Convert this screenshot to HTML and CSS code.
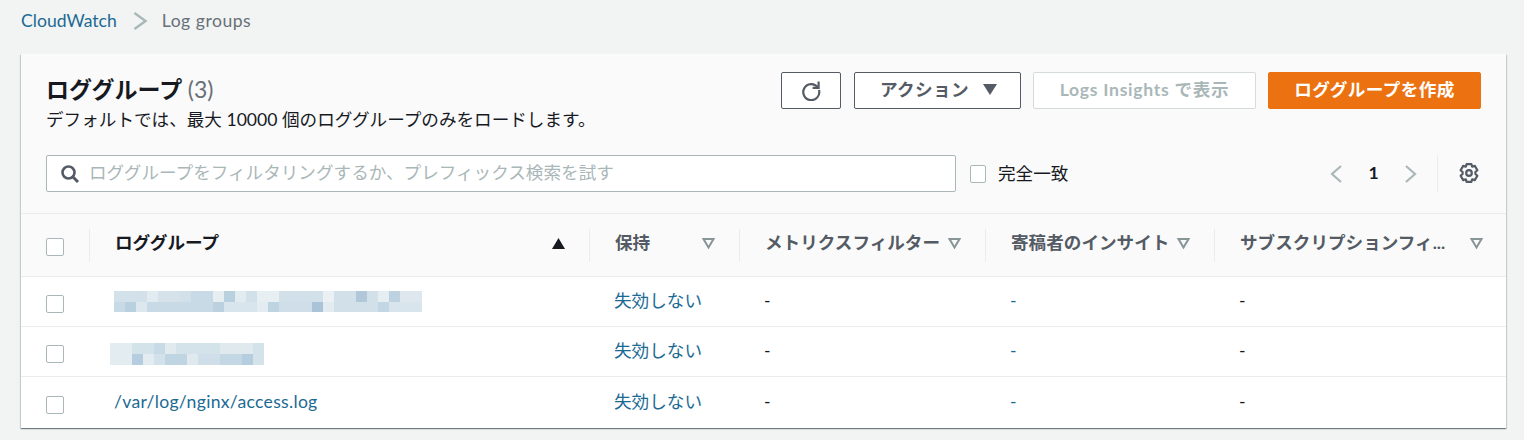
FILE: index.html
```html
<!DOCTYPE html>
<html lang="ja">
<head>
<meta charset="utf-8">
<title>Log groups</title>
<link rel="stylesheet" href="styles.css">
</head>
<body>
<nav class="crumbs">
  <a class="link" href="#">CloudWatch</a>
  <svg class="crumb-sep" width="16" height="20" viewBox="0 0 16 20"><path d="M2.5 2 L13.5 10 L2.5 18" fill="none" stroke="#aab7b8" stroke-width="2.4"/></svg>
  <span class="crumb-cur">Log groups</span>
</nav>
<main class="card">
  <section class="head">
    <div class="head-top">
      <div class="titles">
        <h1 class="title">ロググループ <span class="count">(3)</span></h1>
        <p class="desc">デフォルトでは、最大 10000 個のロググループのみをロードします。</p>
      </div>
      <div class="actions">
        <button class="btn btn-icon"><svg width="22" height="22" viewBox="0 0 22 22"><path d="M17.6 8.2 A8 8 0 1 0 19 11" fill="none" stroke="#545b64" stroke-width="2.2"/><path d="M18.6 2.6 V8.8 H12.6" fill="none" stroke="#545b64" stroke-width="2.2"/></svg></button>
        <button class="btn btn-action">アクション<svg width="14" height="11" viewBox="0 0 14 11"><path d="M0 0 H14 L7 11 Z" fill="#545b64"/></svg></button>
        <button class="btn btn-disabled">Logs Insights で表示</button>
        <button class="btn btn-primary">ロググループを作成</button>
      </div>
    </div>
    <div class="tools">
      <div class="search">
        <svg width="20" height="20" viewBox="0 0 20 20"><circle cx="8.5" cy="8.5" r="6" fill="none" stroke="#545b64" stroke-width="2.6"/><path d="M12.8 12.8 L18 18" stroke="#545b64" stroke-width="3"/></svg>
        <span class="placeholder">ロググループをフィルタリングするか、プレフィックス検索を試す</span>
      </div>
      <label class="exact"><span class="cb cb-small"></span>完全一致</label>
      <div class="pager">
        <svg width="14" height="20" viewBox="0 0 14 20"><path d="M12 2 L3 10 L12 18" fill="none" stroke="#aab7b8" stroke-width="2.2"/></svg>
        <span class="page-num">1</span>
        <svg width="14" height="20" viewBox="0 0 14 20"><path d="M2 2 L11 10 L2 18" fill="none" stroke="#aab7b8" stroke-width="2.2"/></svg>
      </div>
      <div class="gear-wrap">
        <svg width="22" height="22" viewBox="0 0 22 22"><path d="M8.6 2.2 H13.4 L14.2 4.7 L16.8 3.9 L19.4 8.2 L17.4 10 V12 L19.4 13.8 L16.8 18.1 L14.2 17.3 L13.4 19.8 H8.6 L7.8 17.3 L5.2 18.1 L2.6 13.8 L4.6 12 V10 L2.6 8.2 L5.2 3.9 L7.8 4.7 Z" fill="none" stroke="#545b64" stroke-width="2.2" stroke-linejoin="round"/><circle cx="11" cy="11" r="2.8" fill="none" stroke="#545b64" stroke-width="2.2"/></svg>
      </div>
    </div>
  </section>
  <section class="table">
    <div class="row row-head">
      <div class="cell cell-check"><span class="cb"></span></div>
      <div class="cell th th-main"><span class="th-label">ロググループ</span><svg width="13" height="11" viewBox="0 0 13 11"><path d="M6.5 0 L13 11 H0 Z" fill="#16191f"/></svg></div>
      <div class="cell th"><span class="th-label">保持</span><svg class="sort" width="13" height="11" viewBox="0 0 13 11"><path d="M1.5 1 H11.5 L6.5 9.5 Z" fill="none" stroke="#879596" stroke-width="2"/></svg></div>
      <div class="cell th"><span class="th-label">メトリクスフィルター</span><svg class="sort" width="13" height="11" viewBox="0 0 13 11"><path d="M1.5 1 H11.5 L6.5 9.5 Z" fill="none" stroke="#879596" stroke-width="2"/></svg></div>
      <div class="cell th"><span class="th-label">寄稿者のインサイト</span><svg class="sort" width="13" height="11" viewBox="0 0 13 11"><path d="M1.5 1 H11.5 L6.5 9.5 Z" fill="none" stroke="#879596" stroke-width="2"/></svg></div>
      <div class="cell th th-last"><span class="th-label">サブスクリプションフィ...</span><svg class="sort" width="13" height="11" viewBox="0 0 13 11"><path d="M1.5 1 H11.5 L6.5 9.5 Z" fill="none" stroke="#879596" stroke-width="2"/></svg></div>
    </div>
    <div class="row">
      <div class="cell cell-check"><span class="cb"></span></div>
      <div class="cell td-main">
        <svg class="blur" width="308" height="21" viewBox="0 0 28 2" preserveAspectRatio="none" shape-rendering="crispEdges">
          <rect width="28" height="2" fill="#d2e0e9"/>
          <rect x="0" y="0" width="2" height="1" fill="#d3e1ea"/><rect x="3" y="0" width="1" height="1" fill="#e2ebf0"/><rect x="4" y="0" width="2" height="1" fill="#d5e2ea"/><rect x="7" y="0" width="2" height="1" fill="#c8dae5"/><rect x="9" y="0" width="1" height="1" fill="#e6eef2"/><rect x="10" y="0" width="1" height="1" fill="#b9d0df"/><rect x="11" y="0" width="1" height="1" fill="#e2ebf0"/><rect x="13" y="0" width="2" height="1" fill="#e8eff3"/><rect x="19" y="0" width="1" height="1" fill="#eaf0f4"/><rect x="22" y="0" width="1" height="1" fill="#b0c8d9"/><rect x="24" y="0" width="1" height="1" fill="#e6eef2"/><rect x="25" y="0" width="1" height="1" fill="#bdd2e0"/><rect x="26" y="0" width="2" height="1" fill="#dde7ed"/>
          <rect x="0" y="1" width="1" height="1" fill="#c8dae5"/><rect x="1" y="1" width="1" height="1" fill="#b9d0df"/><rect x="2" y="1" width="1" height="1" fill="#dce7ee"/><rect x="3" y="1" width="6" height="1" fill="#c8dae5"/><rect x="9" y="1" width="1" height="1" fill="#bbd1e0"/><rect x="10" y="1" width="3" height="1" fill="#d9e5ec"/><rect x="13" y="1" width="1" height="1" fill="#e3ecf1"/><rect x="14" y="1" width="1" height="1" fill="#bfd4e1"/><rect x="15" y="1" width="3" height="1" fill="#cfdee8"/><rect x="18" y="1" width="1" height="1" fill="#aac3d7"/><rect x="19" y="1" width="1" height="1" fill="#e2ebf0"/><rect x="24" y="1" width="1" height="1" fill="#c3d6e3"/><rect x="25" y="1" width="3" height="1" fill="#d9e5ec"/>
        </svg>
      </div>
      <div class="cell"><a class="link" href="#">失効しない</a></div>
      <div class="cell">-</div>
      <div class="cell"><a class="link" href="#">-</a></div>
      <div class="cell cell-last">-</div>
    </div>
    <div class="row">
      <div class="cell cell-check"><span class="cb"></span></div>
      <div class="cell td-main td-shift">
        <svg class="blur" width="154" height="22" viewBox="0 0 14 2" preserveAspectRatio="none" shape-rendering="crispEdges">
          <rect width="14" height="2" fill="#d4e2ea"/>
          <rect x="0" y="0" width="2" height="1" fill="#e3ecf1"/><rect x="4" y="0" width="1" height="1" fill="#c8dae5"/><rect x="5" y="0" width="1" height="1" fill="#e0eaef"/><rect x="10" y="0" width="3" height="1" fill="#dfe9ee"/>
          <rect x="0" y="1" width="2" height="1" fill="#e3ecf1"/><rect x="2" y="1" width="1" height="1" fill="#b5cdde"/><rect x="3" y="1" width="1" height="1" fill="#e3ecf1"/><rect x="4" y="1" width="1" height="1" fill="#d3e1ea"/><rect x="5" y="1" width="2" height="1" fill="#c0d5e2"/><rect x="7" y="1" width="1" height="1" fill="#dfe9ee"/><rect x="8" y="1" width="2" height="1" fill="#cfdee8"/><rect x="10" y="1" width="2" height="1" fill="#c3d7e4"/><rect x="12" y="1" width="1" height="1" fill="#b5cdde"/>
        </svg>
      </div>
      <div class="cell"><a class="link" href="#">失効しない</a></div>
      <div class="cell">-</div>
      <div class="cell"><a class="link" href="#">-</a></div>
      <div class="cell cell-last">-</div>
    </div>
    <div class="row">
      <div class="cell cell-check"><span class="cb"></span></div>
      <div class="cell td-main"><a class="link link-path" href="#">/var/log/nginx/access.log</a></div>
      <div class="cell"><a class="link" href="#">失効しない</a></div>
      <div class="cell">-</div>
      <div class="cell"><a class="link" href="#">-</a></div>
      <div class="cell cell-last">-</div>
    </div>
  </section>
</main>
</body>
</html>
```
FILE: styles.css
```css
* { box-sizing: border-box; }
html, body { margin: 0; padding: 0; }
body {
  width: 1524px;
  height: 440px;
  overflow: hidden;
  background: #f2f3f3;
  color: #16191f;
  font-family: Lato, "Noto Sans CJK JP", sans-serif;
  font-size: 17.6px;
  line-height: 22px;
}
.link { color: #1b6a94; text-decoration: none; }
.link-path { letter-spacing: .3px; }
.crumbs {
  display: flex;
  align-items: center;
  height: 42px;
  padding-left: 21px;
  margin-bottom: 12px;
}
.crumb-sep { margin: 0 14px 0 15px; }
.crumb-cur { color: #687078; letter-spacing: .5px; }
.card {
  width: 1485px;
  margin-left: 21px;
  height: 374px;
  background: #fff;
  box-shadow: 0 1px 1px 0 rgba(0, 28, 36, .4), 1px 1px 1px 0 rgba(0, 28, 36, .12), -1px 1px 1px 0 rgba(0, 28, 36, .12);
}
.head {
  height: 160px;
  background: #fafafa;
  border-bottom: 1px solid #eaeded;
  padding: 18px 25px 0 25px;
}
.head-top { display: flex; justify-content: space-between; height: 83px; }
.title { margin: 3px 0 0; font-size: 23px; line-height: 28px; font-weight: 700; }
.count { font-weight: 400; color: #687078; }
.desc { margin: 6px 0 0; font-size: 17.6px; line-height: 22px; }
.actions { display: flex; gap: 12px; }
.btn {
  height: 37px;
  border: 1px solid #545b64;
  border-radius: 2px;
  background: #fff;
  color: #545b64;
  font: 700 17.6px/22px Lato, "Noto Sans CJK JP", sans-serif;
  padding: 0 0 2px;
  display: flex;
  align-items: center;
  justify-content: center;
}
.btn-icon { width: 60px; margin-right: 1px; padding: 0 0 2px; }
.btn-action { width: 167px; gap: 14px; letter-spacing: .4px; padding-left: 2px; }
.btn-disabled { width: 223px; border-color: #d5dbdb; color: #aab7b8; letter-spacing: .7px; }
.btn-primary { width: 213px; border-color: #ec7211; background: #ec7211; color: #fff; letter-spacing: .4px; }
.tools { display: flex; align-items: center; height: 37px; }
.search {
  width: 910px;
  height: 37px;
  display: flex;
  align-items: center;
  gap: 9px;
  padding: 0 0 0 13px;
  background: #fff;
  border: 1px solid #aab7b8;
  border-radius: 2px;
}
.placeholder { color: #aab7b8; margin-bottom: 2px; }
.exact { display: flex; align-items: center; gap: 12px; margin-left: 14px; }
.cb {
  display: block;
  width: 18px;
  height: 18px;
  background: #fff;
  border: 1.5px solid #aab7b8;
  border-radius: 2px;
}
.cb-small { width: 16px; }
.pager { display: flex; align-items: center; margin-left: auto; }
.page-num { width: 61px; text-align: center; font-weight: 700; margin-bottom: 2px; }
.gear-wrap {
  display: flex;
  align-items: center;
  height: 37px;
  margin-left: 19px;
  padding-left: 20px;
  border-left: 1px solid #eaeded;
  padding-right: 1px;
  padding-bottom: 2px;
}
.table { display: block; }
.row {
  display: grid;
  grid-template-columns: 68px 500px 150px 246px 229px 1fr;
  align-items: center;
  height: 50px;
  border-bottom: 1px solid #eaeded;
}
.row:last-child { border-bottom: 0; height: 51px; }
.row-head { height: 63px; background: #fafafa; border-bottom: 1px solid #eaeded; }
.cell { display: flex; align-items: center; padding: 0 0 2px 25px; white-space: nowrap; }
.cell-check { padding: 5px 0 0 25px; }
.row-head .cell-check { padding-top: 3px; }
.row:last-child .cell-check { padding-top: 4px; }
.th {
  justify-content: space-between;
  height: 33px;
  padding: 0 24px 4px 25px;
  border-left: 1px solid #eaeded;
  font-weight: 700;
  color: #545b64;
}
.th-main { color: #16191f; }
.th-last { padding-right: 23px; }
.td-main { padding-bottom: 0; }
.td-main .link { margin-bottom: 2px; }
.td-shift { padding-left: 21px; padding-top: 4px; }
.blur { display: block; }
```
